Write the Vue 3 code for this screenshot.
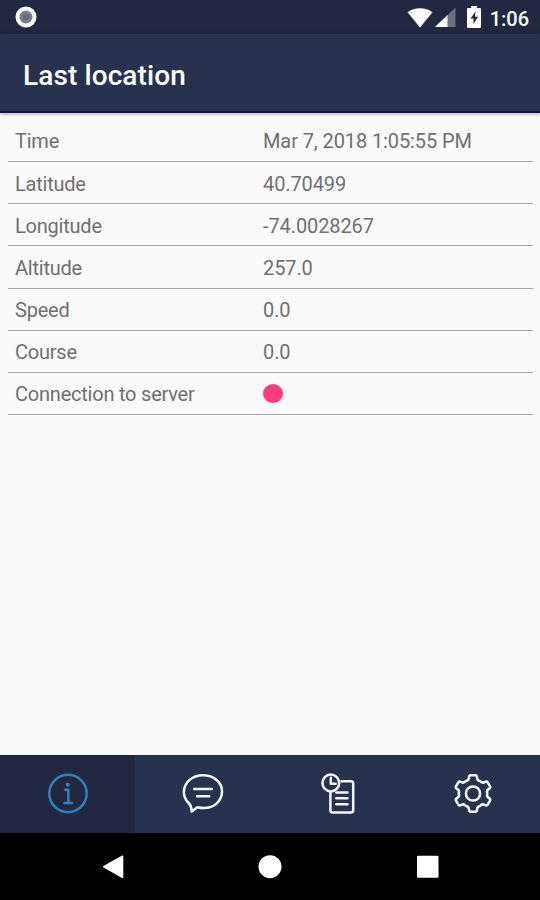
<script setup>
    import { ref } from 'vue';

    const rows = [
        { label: 'Time', value: 'Mar 7, 2018 1:05:55 PM' },
        { label: 'Latitude', value: '40.70499' },
        { label: 'Longitude', value: '-74.0028267' },
        { label: 'Altitude', value: '257.0' },
        { label: 'Speed', value: '0.0' },
        { label: 'Course', value: '0.0' },
        { label: 'Connection to server', status: true },
    ];

    const tabs = ['info', 'messages', 'history', 'settings'];
    const active = ref('info');

    // six teeth, each one is the same outline turned by 60 degrees
    const gearPath = () => {
        const point = (x, y, turn) => {
            const a = turn * Math.PI / 3;
            const px = 23 + x * Math.cos(a) - y * Math.sin(a);
            const py = 21.5 + x * Math.sin(a) + y * Math.cos(a);
            return px.toFixed(2) + ' ' + py.toFixed(2);
        };
        let d = '';
        for (let i = 0; i < 6; i++) {
            d += (i ? 'L' : 'M') + point(-7.2, -12.4, i);
            d += 'Q' + point(-4.3, -12.8, i) + ' ' + point(-4.1, -15.4, i);
            d += 'Q' + point(-4, -18.3, i) + ' ' + point(-2.4, -18.3, i);
            d += 'L' + point(2.4, -18.3, i);
            d += 'Q' + point(4, -18.3, i) + ' ' + point(4.1, -15.4, i);
            d += 'Q' + point(4.3, -12.8, i) + ' ' + point(7.2, -12.4, i);
        }
        return d + 'Z';
    };

    const gear = gearPath();
</script>

<template>
    <div class="screen">
        <div class="status-bar">
            <svg class="record" width="22" height="22" viewBox="0 0 22 22">
                <circle cx="11" cy="11" r="10.5" fill="#fff" />
                <circle cx="11" cy="11" r="6.5" fill="#7b7e8b" />
                <circle cx="11" cy="11" r="3.2" fill="#686b79" />
            </svg>
            <div class="status-icons">
                <svg class="wifi" width="26" height="21" viewBox="0 0 26 21">
                    <path d="M0.5 5.2C7.5-0.2 18.5-0.2 25.5 5.2L13 20.5Z" fill="#fff" />
                </svg>
                <svg class="signal" width="21" height="20" viewBox="0 0 21 20">
                    <path d="M20.5 0.5V20H0Z" fill="#6b6f80" />
                    <path d="M12.5 8V20H0Z" fill="#fff" />
                </svg>
                <svg class="battery" width="14" height="22" viewBox="0 0 14 22">
                    <path d="M4 0H10V2H13Q14 2 14 3V21Q14 22 13 22H1Q0 22 0 21V3Q0 2 1 2H4Z" fill="#fff" />
                    <path d="M8.5 5.5L3.5 12.5H6.5V18L11 10.8H8Z" fill="#22283f" />
                </svg>
                <span class="clock">1:06</span>
            </div>
        </div>

        <div class="app-bar">
            <h1 class="title">Last location</h1>
        </div>

        <div class="content">
            <div class="row" v-for="row in rows" :key="row.label">
                <div class="label">{{ row.label }}</div>
                <div class="value">
                    <div v-if="row.status" class="status-dot"></div>
                    <template v-else>{{ row.value }}</template>
                </div>
            </div>
        </div>

        <div class="tabs">
            <div class="tab" v-for="tab in tabs" :key="tab" :class="{ 'tab-active': tab === active }" @click="active = tab">
                <svg class="tab-icon" width="45" height="44" viewBox="0 0 45 44">
                    <template v-if="tab === 'info'">
                        <circle cx="23" cy="21.5" r="18.7" />
                        <circle class="solid" cx="22.8" cy="12.7" r="2" />
                        <path d="M20 17.8H23.3V31M19.4 31.1H27" />
                    </template>
                    <template v-else-if="tab === 'messages'">
                        <path d="M8.2 30.5C5.4 27.7 3.9 24.2 3.9 20.2C3.9 10.5 12 3.3 23 3.3C34 3.3 42 10.3 42 19.5C42 29 34 36 24 36C21.5 36 19.5 35.7 17.4 35.2L11.7 39.4Q11.7 34 8.2 30.5Z" />
                        <path d="M14.2 16.9H31.8M17 24.2H29.2" />
                    </template>
                    <template v-else-if="tab === 'history'">
                        <path d="M26.5 9.3H36Q38.2 9.3 38.2 11.5V38.2Q38.2 40.4 36 40.4H17.6Q15.4 40.4 15.4 38.2V20.5" />
                        <circle cx="15.8" cy="11" r="8.4" />
                        <path d="M15.8 5.8V11.8H20.6" />
                        <path d="M21.3 20.5H32.5M21.3 26.2H32.5M21.3 32.2H32.5" />
                    </template>
                    <template v-else>
                        <path :d="gear" />
                        <circle cx="23" cy="21.5" r="7.1" />
                    </template>
                </svg>
            </div>
        </div>

        <div class="nav-bar">
            <svg width="24" height="26" viewBox="0 0 24 26">
                <path d="M21.5 2.3V23.3L2.8 12.8Z" fill="#fff" stroke="#fff" stroke-width="1.6" stroke-linejoin="round" />
            </svg>
            <svg width="24" height="26" viewBox="0 0 24 26">
                <circle cx="12" cy="12.7" r="11.5" fill="#fff" />
            </svg>
            <svg width="24" height="26" viewBox="0 0 24 26">
                <rect x="1" y="1.8" width="21.5" height="22" rx="1" fill="#fff" />
            </svg>
        </div>
    </div>
</template>

<style>
    body {
        margin: 0;
    }
</style>

<style scoped>
    .screen {
        width: 540px;
        height: 900px;
        display: flex;
        flex-direction: column;
        background-color: #fafafa;
        font-family: Roboto, "Liberation Sans", sans-serif;
        overflow: hidden;
    }

    .status-bar {
        height: 34px;
        box-sizing: border-box;
        padding: 0 11px 0 15px;
        display: flex;
        align-items: center;
        justify-content: space-between;
        background-color: #22283f;
    }

    .status-icons {
        display: flex;
        align-items: center;
    }

    .signal {
        margin-left: 2px;
    }

    .battery {
        margin-left: 11px;
    }

    .clock {
        margin-left: 9px;
        margin-top: 3px;
        color: #fff;
        font-size: 20px;
        font-weight: 500;
        line-height: 24px;
    }

    .app-bar {
        height: 79px;
        box-sizing: border-box;
        padding: 7px 23px 0;
        display: flex;
        align-items: center;
        background-color: #28314e;
        border-bottom: 2px solid #14174a;
        box-shadow: 0 1px 4px rgba(0, 0, 0, .35);
    }

    .title {
        margin: 0;
        color: #fff;
        font-size: 28px;
        font-weight: 500;
        line-height: 32px;
        letter-spacing: .1px;
    }

    .content {
        flex-grow: 1;
        padding: 7px 7px 0 8px;
    }

    .row {
        height: 42.17px;
        box-sizing: border-box;
        padding-left: 7px;
        display: grid;
        grid-template-columns: 248px 1fr;
        align-items: center;
        border-bottom: 1px solid #a8a8a8;
        color: #707070;
        font-size: 20px;
        line-height: 24px;
    }

    .label {
        padding-top: 1.6px;
        letter-spacing: -.22px;
    }

    .value {
        padding-top: 1.6px;
        letter-spacing: -.1px;
    }

    .status-dot {
        width: 20px;
        height: 19px;
        margin: -2px 0 0 -.5px;
        border-radius: 50%;
        background-color: #ff3d7c;
    }

    .tabs {
        height: 78px;
        display: flex;
        background-color: #28314e;
    }

    .tab {
        flex: 1;
        display: flex;
        align-items: center;
        justify-content: center;
        color: #f4f6ff;
    }

    .tab-active {
        background-color: #22283f;
        color: #2e80b8;
    }

    .tab-icon {
        fill: none;
        stroke: currentColor;
        stroke-width: 2.5;
        stroke-linecap: round;
        stroke-linejoin: round;
    }

    .solid {
        fill: currentColor;
        stroke: none;
    }

    .nav-bar {
        height: 67px;
        box-sizing: border-box;
        padding: 0 100.5px;
        display: flex;
        align-items: center;
        justify-content: space-between;
        background-color: #000;
    }
</style>
